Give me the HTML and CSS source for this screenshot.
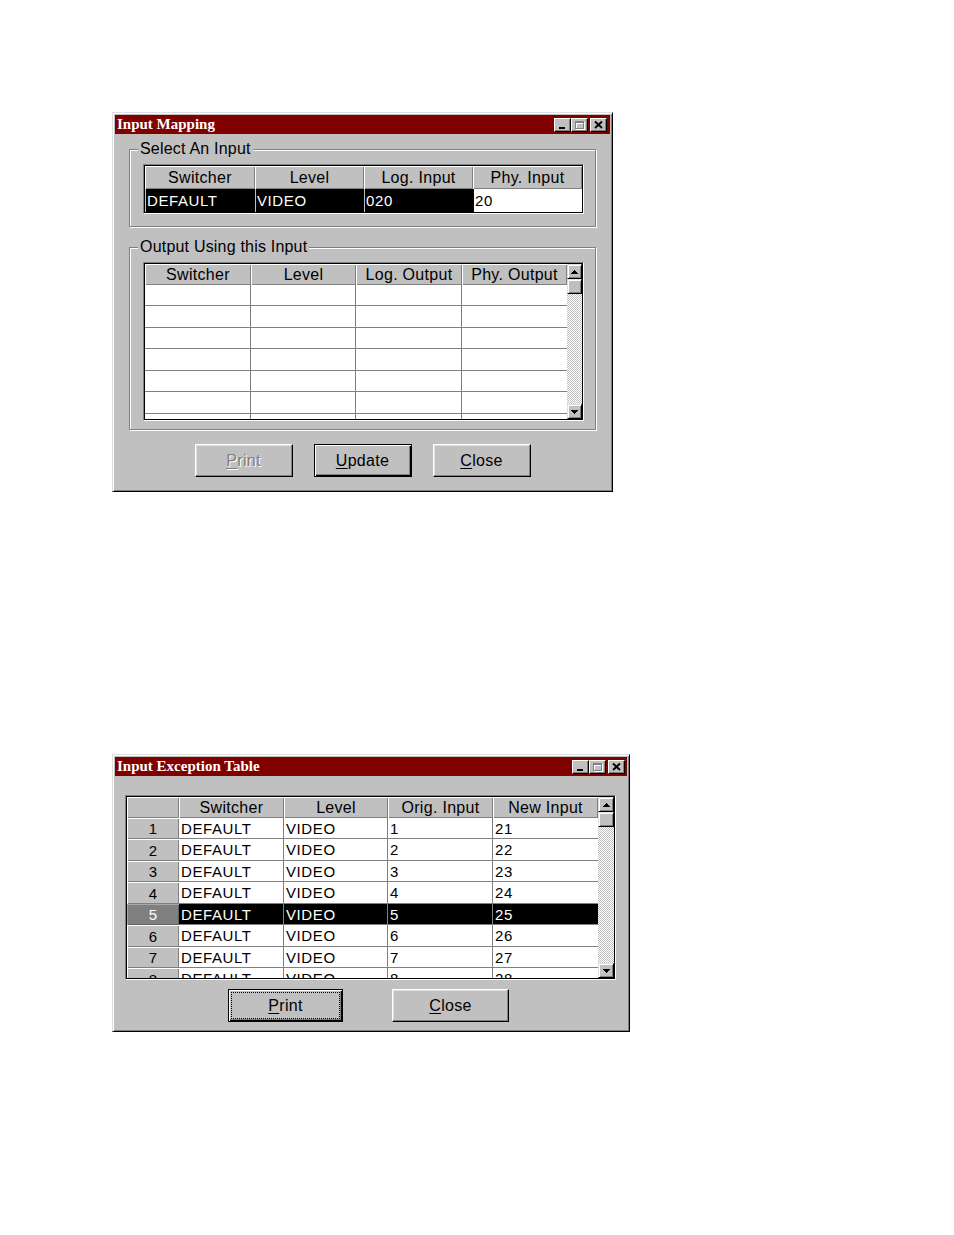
FILE: index.html
```html
<!DOCTYPE html>
<html>
<head>
<meta charset="utf-8">
<title>Input Mapping</title>
<link rel="stylesheet" href="styles.css">
</head>
<body>
<div class="win win-map">
  <div class="titlebar">
    <span class="title">Input Mapping</span>
    <div class="tbtns">
      <span class="tbtn"><svg width="15" height="12" viewBox="0 0 15 12"><rect x="4" y="8" width="6" height="2" fill="#000"/></svg></span>
      <span class="tbtn"><svg width="15" height="12" viewBox="0 0 15 12" shape-rendering="crispEdges"><path d="M3 2h9v8H3z M4 4v5h7V4z" fill="#fff" fill-rule="evenodd" transform="translate(1 1)"/><path d="M3 2h9v8H3z M4 4v5h7V4z" fill="#808080" fill-rule="evenodd"/></svg></span>
      <span class="tbtn close"><svg width="15" height="12" viewBox="0 0 15 12"><path d="M4 2.5l7 6.5M11 2.5l-7 6.5" stroke="#000" stroke-width="1.9"/></svg></span>
    </div>
  </div>

  <fieldset class="group g1">
    <legend>Select An Input</legend>
    <div class="tbl t1">
      <div class="tbl-in grid-sel">
        <div class="hc">Switcher</div>
        <div class="hc">Level</div>
        <div class="hc">Log. Input</div>
        <div class="hc">Phy. Input</div>
        <div class="sc">DEFAULT</div>
        <div class="sc">VIDEO</div>
        <div class="sc">020</div>
        <div class="sc edit">20</div>
      </div>
    </div>
  </fieldset>

  <fieldset class="group g2">
    <legend>Output Using this Input</legend>
    <div class="tbl t2">
      <div class="tbl-in hflex">
        <div class="gmain">
          <div class="ghead cols-out">
            <div class="hc">Switcher</div>
            <div class="hc">Level</div>
            <div class="hc">Log. Output</div>
            <div class="hc">Phy. Output</div>
          </div>
          <div class="gbody cols-out">
            <div class="bc"></div><div class="bc"></div><div class="bc"></div><div class="bc"></div>
            <div class="bc"></div><div class="bc"></div><div class="bc"></div><div class="bc"></div>
            <div class="bc"></div><div class="bc"></div><div class="bc"></div><div class="bc"></div>
            <div class="bc"></div><div class="bc"></div><div class="bc"></div><div class="bc"></div>
            <div class="bc"></div><div class="bc"></div><div class="bc"></div><div class="bc"></div>
            <div class="bc"></div><div class="bc"></div><div class="bc"></div><div class="bc"></div>
            <div class="bc"></div><div class="bc"></div><div class="bc"></div><div class="bc"></div>
          </div>
        </div>
        <div class="vscroll">
          <div class="sbtn"><svg width="7" height="4" viewBox="0 0 7 4" shape-rendering="crispEdges"><path d="M3 0h1v1h1v1h1v1h1v1H0V3h1V2h1V1h1z"/></svg></div>
          <div class="sbtn"></div>
          <div class="strack"></div>
          <div class="sbtn"><svg width="7" height="4" viewBox="0 0 7 4" shape-rendering="crispEdges"><path d="M0 0h7v1H6v1H5v1H4v1H3V3H2V2H1V1H0z"/></svg></div>
        </div>
      </div>
    </div>
  </fieldset>

  <div class="btns btns-map">
    <button type="button" class="btn dis"><span class="lbl"><u>P</u>rint</span></button>
    <button type="button" class="btn def"><span class="lbl"><u>U</u>pdate</span></button>
    <button type="button" class="btn"><span class="lbl"><u>C</u>lose</span></button>
  </div>
</div>

<div class="win win-exc">
  <div class="titlebar">
    <span class="title">Input Exception Table</span>
    <div class="tbtns">
      <span class="tbtn"><svg width="15" height="12" viewBox="0 0 15 12"><rect x="4" y="8" width="6" height="2" fill="#000"/></svg></span>
      <span class="tbtn"><svg width="15" height="12" viewBox="0 0 15 12" shape-rendering="crispEdges"><path d="M3 2h9v8H3z M4 4v5h7V4z" fill="#fff" fill-rule="evenodd" transform="translate(1 1)"/><path d="M3 2h9v8H3z M4 4v5h7V4z" fill="#808080" fill-rule="evenodd"/></svg></span>
      <span class="tbtn close"><svg width="15" height="12" viewBox="0 0 15 12"><path d="M4 2.5l7 6.5M11 2.5l-7 6.5" stroke="#000" stroke-width="1.9"/></svg></span>
    </div>
  </div>

  <div class="tbl t3">
    <div class="tbl-in hflex">
      <div class="gmain">
        <div class="ghead cols-exc">
          <div class="hc"></div>
          <div class="hc">Switcher</div>
          <div class="hc">Level</div>
          <div class="hc">Orig. Input</div>
          <div class="hc">New Input</div>
        </div>
        <div class="gbody cols-exc">
          <div class="rn">1</div><div class="bc">DEFAULT</div><div class="bc">VIDEO</div><div class="bc">1</div><div class="bc">21</div>
          <div class="rn">2</div><div class="bc">DEFAULT</div><div class="bc">VIDEO</div><div class="bc">2</div><div class="bc">22</div>
          <div class="rn">3</div><div class="bc">DEFAULT</div><div class="bc">VIDEO</div><div class="bc">3</div><div class="bc">23</div>
          <div class="rn">4</div><div class="bc">DEFAULT</div><div class="bc">VIDEO</div><div class="bc">4</div><div class="bc">24</div>
          <div class="rn sel">5</div><div class="bc sel">DEFAULT</div><div class="bc sel">VIDEO</div><div class="bc sel">5</div><div class="bc sel">25</div>
          <div class="rn">6</div><div class="bc">DEFAULT</div><div class="bc">VIDEO</div><div class="bc">6</div><div class="bc">26</div>
          <div class="rn">7</div><div class="bc">DEFAULT</div><div class="bc">VIDEO</div><div class="bc">7</div><div class="bc">27</div>
          <div class="rn">8</div><div class="bc">DEFAULT</div><div class="bc">VIDEO</div><div class="bc">8</div><div class="bc">28</div>
        </div>
      </div>
      <div class="vscroll wide">
        <div class="sbtn"><svg width="7" height="4" viewBox="0 0 7 4" shape-rendering="crispEdges"><path d="M3 0h1v1h1v1h1v1h1v1H0V3h1V2h1V1h1z"/></svg></div>
        <div class="sbtn"></div>
        <div class="strack"></div>
        <div class="sbtn"><svg width="7" height="4" viewBox="0 0 7 4" shape-rendering="crispEdges"><path d="M0 0h7v1H6v1H5v1H4v1H3V3H2V2H1V1H0z"/></svg></div>
      </div>
    </div>
  </div>

  <div class="btns btns-exc">
    <button type="button" class="btn def focus w115"><span class="lbl"><u>P</u>rint</span></button>
    <button type="button" class="btn w117"><span class="lbl"><u>C</u>lose</span></button>
  </div>
</div>
</body>
</html>
```

FILE: styles.css
```css
* { box-sizing: border-box; }

body {
  margin: 0;
  background: #fff;
  font-family: "Liberation Sans", Arial, sans-serif;
  color: #000;
}

/* ---------- window frame ---------- */
.win {
  background: #c0c0c0;
  border: 1px solid;
  border-color: #dfdfdf #000 #000 #dfdfdf;
  box-shadow: inset 1px 1px #fff, inset -1px -1px #808080;
  padding: 2px;
  display: flex;
  flex-direction: column;
}
.win-map { width: 501px; height: 380px; margin: 112px 0 0 112px; }
.win-exc { width: 518px; height: 278px; margin: 262px 0 0 112px; }

.titlebar {
  flex: none;
  height: 19px;
  background: #800000;
  display: flex;
  align-items: center;
  padding: 0 2px 0 2px;
}
.win-map .titlebar { padding-right: 3px; }
.title {
  flex: 1;
  color: #fff;
  font: bold 15px "Liberation Serif", "Times New Roman", serif;
  line-height: 19px;
}
.tbtns { display: flex; }
.tbtn {
  width: 17px;
  height: 14px;
  background: #c0c0c0;
  border: 1px solid;
  border-color: #fff #000 #000 #fff;
  box-shadow: inset -1px -1px #808080;
  display: flex;
}
.tbtn svg { display: block; }
.tbtn.close { margin-left: 2px; }

/* ---------- group boxes ---------- */
.group {
  margin: 6px 14px 0;
  padding: 6px 0 12px 8px;
  border: 1px solid #808080;
  box-shadow: 1px 1px 0 #fff, inset 1px 1px 0 #fff;
  min-width: 0;
}
.group legend {
  padding: 0 2px;
  font-size: 16px;
  line-height: 18px;
  letter-spacing: 0.2px;
  background: #c0c0c0;
}
.g2 { margin-top: 11px; padding-bottom: 8px; }

/* ---------- tables ---------- */
.tbl {
  border: 1px solid;
  border-color: #808080 #fff #fff #808080;
}
.tbl-in {
  border: 1px solid #000;
  background: #fff;
  height: 100%;
}
.t1 { width: 441px; height: 50px; margin-left: 5px; }
.t2 { width: 441px; height: 159px; margin-left: 5px; }
.t3 { width: 491px; height: 185px; margin: 19px 0 0 10px; flex: none; }

.grid-sel {
  display: grid;
  grid-template-columns: 110px 109px 109px 109px;
  grid-template-rows: 23px 23px;
  background: #000;
}

.hc {
  background: #c0c0c0;
  box-shadow: inset 1px 1px #fff, inset -1px -1px #808080;
  display: flex;
  align-items: center;
  justify-content: center;
  font-size: 16px;
  letter-spacing: 0.3px;
  white-space: nowrap;
  overflow: hidden;
}

.sc {
  background: #000;
  color: #fff;
  border-left: 1px solid #c0c0c0;
  display: flex;
  align-items: center;
  padding-left: 1px;
  font-size: 15px;
  letter-spacing: 0.6px;
}
.sc.edit {
  background: #fff;
  color: #000;
  border-left: 1px solid #000;
}

.hflex { display: flex; }
.gmain {
  flex: 1;
  min-width: 0;
  display: flex;
  flex-direction: column;
  overflow: hidden;
}
.ghead { display: grid; grid-template-rows: 21px; flex: none; }
.gbody {
  display: grid;
  grid-auto-rows: 21px 22px;
  flex: 1;
  min-height: 0;
  overflow: hidden;
  align-content: start;
}
.cols-out { grid-template-columns: 106px 105px 106px 105px; }
.cols-exc { grid-template-columns: 52px 105px 104px 105px 105px; }

.bc {
  border-right: 1px solid #808080;
  border-bottom: 1px solid #808080;
  display: flex;
  align-items: center;
  padding-left: 2px;
  font-size: 15px;
  letter-spacing: 0.6px;
  white-space: nowrap;
  overflow: hidden;
}
.cols-out .bc:nth-child(4n) { border-right: none; }
.cols-exc .bc:nth-child(5n) { border-right: none; }
.bc.sel { background: #000; color: #fff; }

.rn {
  background: #c0c0c0;
  box-shadow: inset 1px 1px #fff, inset -1px -1px #808080;
  display: flex;
  align-items: center;
  justify-content: center;
  font-size: 15px;
}
.rn.sel {
  background: #808080;
  color: #fff;
  box-shadow: inset 1px 1px #a8a8a8, inset -1px -1px #606060;
}

/* ---------- scrollbar ---------- */
.vscroll {
  flex: none;
  width: 15px;
  display: flex;
  flex-direction: column;
}
.vscroll.wide { width: 16px; }
.sbtn {
  flex: none;
  height: 15px;
  background: #c0c0c0;
  border: 1px solid;
  border-color: #dfdfdf #000 #000 #dfdfdf;
  box-shadow: inset 1px 1px #fff, inset -1px -1px #808080;
  display: flex;
  align-items: center;
  justify-content: center;
}
.sbtn svg { display: block; }
.strack {
  flex: 1;
  background: repeating-conic-gradient(#c0c0c0 0 25%, #fff 0 50%) 0 0 / 2px 2px;
}

/* ---------- buttons ---------- */
.btns { display: flex; flex: none; }
.btns-map { justify-content: center; gap: 21px; margin-top: 14px; }
.btns-exc { padding-left: 113px; gap: 49px; margin-top: 9px; }

.btn {
  width: 98px;
  height: 33px;
  margin: 0;
  padding: 2px;
  background: #c0c0c0;
  border: 1px solid;
  border-color: #fff #000 #000 #fff;
  box-shadow: inset -1px -1px #808080, inset 1px 1px #dfdfdf;
  font: 16px "Liberation Sans", Arial, sans-serif;
  letter-spacing: 0.3px;
  color: #000;
  display: flex;
  align-items: stretch;
  justify-content: stretch;
}
.btn .lbl {
  flex: 1;
  display: flex;
  align-items: center;
  justify-content: center;
  border: 1px solid transparent;
}
.btn u { text-underline-offset: 2px; }
.btn.def {
  border-color: #000;
  box-shadow: inset 1px 1px #fff, inset -1px -1px #000, inset -2px -2px #808080;
}
.btn.focus .lbl { border: 1px dotted #000; }
.btn.dis { color: #808080; text-shadow: 1px 1px 0 #fff; }
.w115 { width: 115px; }
.w117 { width: 117px; }
```
